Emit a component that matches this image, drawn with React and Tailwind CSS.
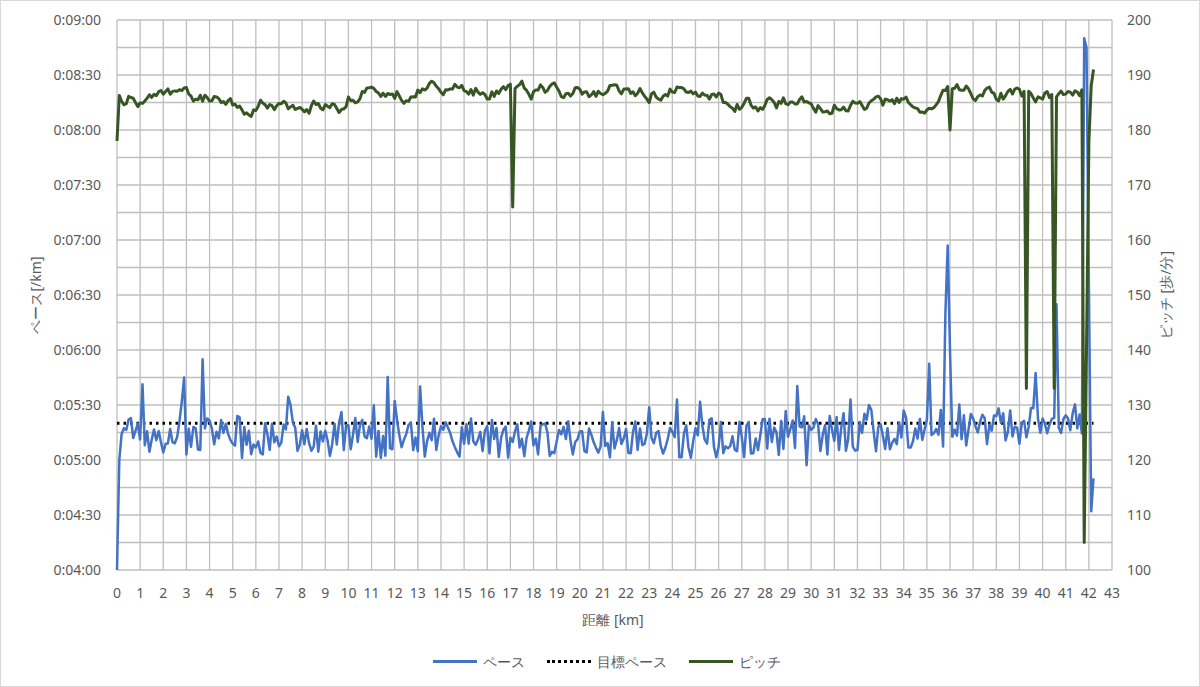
import React from "react";

function rng(seed) {
  let s = seed;
  return () => {
    s = (s * 1664525 + 1013904223) % 4294967296;
    return s / 4294967296;
  };
}

const X0 = 116, X1 = 1111, Y0 = 19, Y1 = 569;
const kx = (km) => X0 + (km / 43) * (X1 - X0);
const py = (sec) => Y0 + ((540 - sec) / 300) * (Y1 - Y0);
const cy = (p) => Y1 - ((p - 100) / 100) * (Y1 - Y0);

function buildData() {
  const r = rng(12345);
  const pace = [];
  const pitch = [];
  let pv = 186;
  const near = (km, v) => Math.abs(km - v) < 0.05;
  for (let i = 0; i <= 422; i++) {
    const km = i * 0.1;
    let s = 312 + (r() - 0.5) * 22 + (r() < 0.12 ? (r() - 0.3) * 40 : 0);
    if (km > 28) s += (km - 28) * 0.7;
    if (i === 0) s = 240;
    if (i === 1) s = 300;
    if (near(km, 3.7)) s = 355;
    if (near(km, 2.9)) s = 345;
    if (near(km, 35.8)) s = 380;
    if (near(km, 35.9)) s = 417;
    if (near(km, 36.0)) s = 360;
    if (near(km, 40.6)) s = 385;
    if (near(km, 41.8)) s = 530;
    if (near(km, 41.9)) s = 525;
    if (near(km, 42.0)) s = 395;
    if (near(km, 42.1)) s = 272;
    if (near(km, 42.2)) s = 290;
    pace.push([kx(km), py(s)]);

    pv += (r() - 0.5) * 3;
    const target = km < 5 ? 186 : km < 10 ? 184.5 : km < 25 ? 187 : km < 35 ? 185 : 186.5;
    pv += (target - pv) * 0.3;
    let p = pv;
    if (i === 0) p = 178;
    if (near(km, 17.1)) p = 166;
    if (near(km, 36)) p = 180;
    if (near(km, 39.3)) p = 133;
    if (near(km, 40.5)) p = 133;
    if (near(km, 41.8)) p = 105;
    if (near(km, 41.9)) p = 140;
    if (near(km, 42.0)) p = 178;
    if (near(km, 42.1)) p = 188;
    if (near(km, 42.2)) p = 191;
    pitch.push([kx(km), cy(p)]);
  }
  return { pace, pitch };
}

const toPts = (a) => a.map(([x, y]) => `${x.toFixed(1)},${y.toFixed(1)}`).join(" ");

export default function App() {
  const { pace, pitch } = buildData();
  const leftLabels = ["0:09:00", "0:08:30", "0:08:00", "0:07:30", "0:07:00", "0:06:30", "0:06:00", "0:05:30", "0:05:00", "0:04:30", "0:04:00"];
  const rightLabels = [200, 190, 180, 170, 160, 150, 140, 130, 120, 110, 100];
  return (
    <div className="w-[1200px] h-[687px] bg-white border border-[#d9d9d9] box-border flex flex-col font-['Noto_Sans_CJK_JP','Noto_Sans',sans-serif] text-[14px] text-[#595959]">
      <svg width="1198" height="640" className="font-['Noto_Sans_CJK_JP','Noto_Sans',sans-serif]">
        {Array.from({ length: 21 }, (_, i) => (
          <line key={"h" + i} x1={X0} x2={X1} y1={Y0 + i * 27.5} y2={Y0 + i * 27.5} stroke="#bfbfbf" strokeWidth="1.3" />
        ))}
        {Array.from({ length: 44 }, (_, i) => (
          <line key={"v" + i} x1={kx(i)} x2={kx(i)} y1={Y0} y2={Y1} stroke="#bfbfbf" strokeWidth="1.3" />
        ))}
        {leftLabels.map((t, i) => (
          <text key={t} x="100" y={Y0 + i * 55 + 5} textAnchor="end" fontSize="14" fill="#595959">{t}</text>
        ))}
        {rightLabels.map((t, i) => (
          <text key={t} x="1126" y={Y0 + i * 55 + 5} fontSize="14" fill="#595959">{t}</text>
        ))}
        {Array.from({ length: 44 }, (_, i) => (
          <text key={"x" + i} x={kx(i)} y="597" textAnchor="middle" fontSize="14" fill="#595959">{i}</text>
        ))}
        <text x="612" y="624" textAnchor="middle" fontSize="14" fill="#595959">距離 [km]</text>
        <text transform="translate(40 294) rotate(-90)" textAnchor="middle" fontSize="14" fill="#595959">ペース[/km]</text>
        <text transform="translate(1170 294) rotate(-90)" textAnchor="middle" fontSize="14" fill="#595959">ピッチ [歩/分]</text>
        <line x1={X0} x2={kx(42.2)} y1={py(320)} y2={py(320)} stroke="#000" strokeWidth="3" strokeDasharray="2.5 4" />
        <polyline points={toPts(pace)} fill="none" stroke="#4472c4" strokeWidth="2.5" strokeLinejoin="round" />
        <polyline points={toPts(pitch)} fill="none" stroke="#375623" strokeWidth="3" strokeLinejoin="round" />
      </svg>
      <div className="flex justify-center items-center gap-[22px] mt-[10px] pl-[14px]">
        <div className="flex items-center gap-[6px]">
          <span className="w-[44px] h-[3px] bg-[#4472c4]" />
          <span>ペース</span>
        </div>
        <div className="flex items-center gap-[6px]">
          <span className="w-[44px] h-0 border-t-[3px] border-dotted border-black" />
          <span>目標ペース</span>
        </div>
        <div className="flex items-center gap-[6px]">
          <span className="w-[44px] h-[3px] bg-[#375623]" />
          <span>ピッチ</span>
        </div>
      </div>
    </div>
  );
}
